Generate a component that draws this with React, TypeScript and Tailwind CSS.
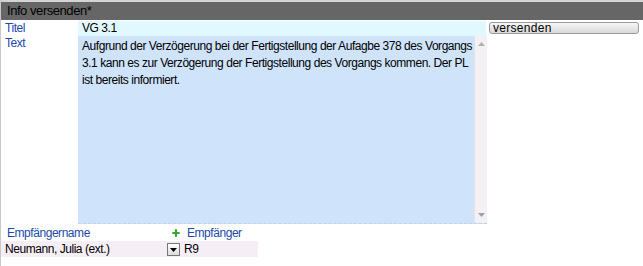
import { Plus } from "lucide-react";

const lines = [
  "Aufgrund der Verzögerung bei der Fertigstellung der Aufagbe 378 des Vorgangs",
  "3.1 kann es zur Verzögerung der Fertigstellung des Vorgangs kommen. Der PL",
  "ist bereits informiert.",
];

export default function App() {
  return (
    <div className="w-[643px] h-[266px] bg-white border-l border-[#c8c8c8] font-['Liberation_Sans',Arial,sans-serif] text-[12px] tracking-[-0.45px] text-black overflow-hidden">
      <div className="h-[20px] border-t-2 border-[#d4d4d4] bg-[#666666] pl-[6px] text-[13px] leading-[18px] text-black">
        Info versenden*
      </div>

      <div className="flex h-[15px] mt-[1px]">
        <div className="w-[77px] pl-[4px] text-[#1b4aa8] leading-[14px]">Titel</div>
        <div className="w-[408px] bg-[#e2f8ff] pl-[4px] leading-[15px]">VG 3.1</div>
        <div className="ml-[3px] mt-[1px] w-[150px] h-[12px] rounded-[3px] border border-[#9a9a9a] bg-gradient-to-b from-[#f6f6f6] to-[#d9d9d9] pl-[3px] text-[12px] leading-[10px] tracking-[0.3px]">
          versenden
        </div>
      </div>

      <div className="flex h-[188px]">
        <div className="w-[77px] pl-[4px] text-[#1b4aa8] leading-[14px]">Text</div>
        <div className="flex w-[409px] bg-[#cfe4fb] border-b border-dashed border-[#b8d4f0]">
          <div className="flex-1 pl-[4px] pr-[2px] pt-[2px] leading-[17px] whitespace-nowrap">
            {lines.map((l) => (
              <div key={l}>{l}</div>
            ))}
          </div>
          <div className="w-[16px] bg-[#f3f1f4] border-l border-[#e2e2e2] flex flex-col justify-between items-center py-[6px]">
            <svg width="7" height="4" viewBox="0 0 7 4"><path d="M0 4 L3.5 0 L7 4 Z" fill="#b0b0b0" /></svg>
            <svg width="7" height="4" viewBox="0 0 7 4"><path d="M0 0 L3.5 4 L7 0 Z" fill="#a0a0a0" /></svg>
          </div>
        </div>
      </div>

      <div className="flex items-center h-[16px] mt-[1px] text-[#1b4aa8]">
        <div className="w-[170px] pl-[6px]">Empfängername</div>
        <Plus className="w-[10px] h-[10px] text-[#2fa82f]" strokeWidth={5} />
        <div className="ml-[6px]">Empfänger</div>
      </div>

      <div className="flex items-center w-[257px] h-[16px] bg-[#f5eff5]">
        <div className="w-[166px] pl-[4px]">Neumann, Julia (ext.)</div>
        <div className="w-[13px] h-[13px] border border-[#777] bg-gradient-to-b from-white to-[#dcdcdc] flex items-end justify-center pb-[3px]">
          <svg width="7" height="4" viewBox="0 0 7 4"><path d="M0 0 L3.5 4 L7 0 Z" fill="#000" /></svg>
        </div>
        <div className="ml-[4px]">R9</div>
      </div>
    </div>
  );
}
